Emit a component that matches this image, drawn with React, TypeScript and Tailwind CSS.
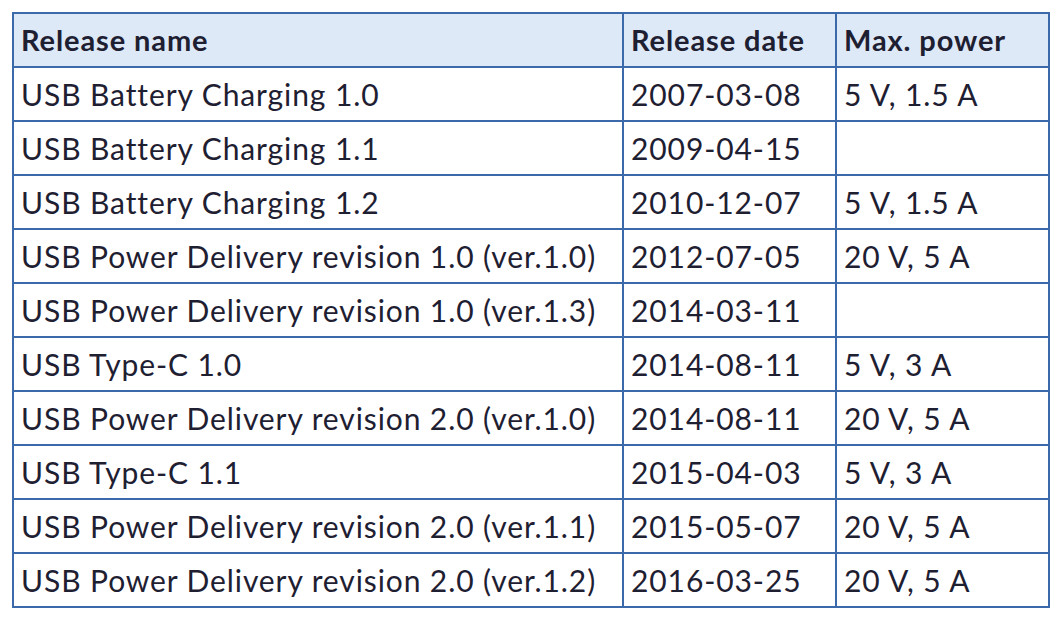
import React from 'react';

const rows: [string, string, string][] = [
  ['USB Battery Charging 1.0', '2007-03-08', '5 V, 1.5 A'],
  ['USB Battery Charging 1.1', '2009-04-15', ''],
  ['USB Battery Charging 1.2', '2010-12-07', '5 V, 1.5 A'],
  ['USB Power Delivery revision 1.0 (ver.1.0)', '2012-07-05', '20 V, 5 A'],
  ['USB Power Delivery revision 1.0 (ver.1.3)', '2014-03-11', ''],
  ['USB Type-C 1.0', '2014-08-11', '5 V, 3 A'],
  ['USB Power Delivery revision 2.0 (ver.1.0)', '2014-08-11', '20 V, 5 A'],
  ['USB Type-C 1.1', '2015-04-03', '5 V, 3 A'],
  ['USB Power Delivery revision 2.0 (ver.1.1)', '2015-05-07', '20 V, 5 A'],
  ['USB Power Delivery revision 2.0 (ver.1.2)', '2016-03-25', '20 V, 5 A'],
];

const cell = 'border-2 border-[#3b69a9] h-[54px] pl-[7px] pr-0 py-0 align-middle whitespace-nowrap overflow-hidden';

export default function App() {
  return (
    <div className="w-[1060px] h-[620px] bg-white pt-[12px] pl-[12px] font-['Lato','Liberation_Sans',sans-serif] text-[#1e2032]">
      <table className="border-collapse table-fixed w-[1036px]">
        <colgroup>
          <col className="w-[610px]" />
          <col className="w-[213px]" />
          <col className="w-[213px]" />
        </colgroup>
        <thead>
          <tr className="bg-[#dde9f7] text-[29px] tracking-[0.9px] font-bold text-left">
            <th className={cell}>Release name</th>
            <th className={cell}>Release date</th>
            <th className={cell}>Max. power</th>
          </tr>
        </thead>
        <tbody className="text-[30px] tracking-[0.9px]">
          {rows.map(([name, date, power]) => (
            <tr key={name}>
              <td className={cell}>{name}</td>
              <td className={cell}>{date}</td>
              <td className={cell}>{power}</td>
            </tr>
          ))}
        </tbody>
      </table>
    </div>
  );
}
